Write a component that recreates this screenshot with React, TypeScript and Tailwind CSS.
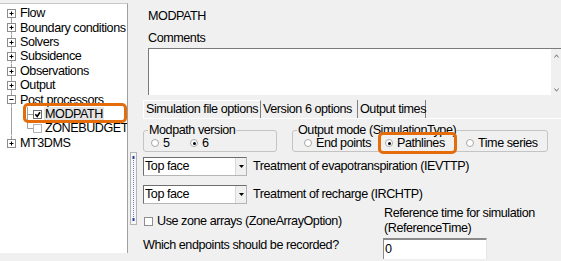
import React from "react";

function TreeBox({ open = false, top = true, bottom = true }: { open?: boolean; top?: boolean; bottom?: boolean }) {
	return (
		<svg width="18" height="14.4" className="shrink-0">
			{top && <line x1="11.5" y1="0" x2="11.5" y2="3" stroke="#a0a0a0" />}
			{bottom && <line x1="11.5" y1="12" x2="11.5" y2="14.4" stroke="#a0a0a0" />}
			<rect x="7.5" y="3.5" width="8" height="8" fill="#fff" stroke="#8c8c8c" />
			<line x1="9.5" y1="7.5" x2="13.5" y2="7.5" stroke="#000" />
			{!open && <line x1="11.5" y1="5.5" x2="11.5" y2="9.5" stroke="#000" />}
		</svg>
	);
}

function ChildLines({ checked, last }: { checked: boolean; last: boolean }) {
	return (
		<svg width="44" height="14.4" className="shrink-0">
			<line x1="11.5" y1="0" x2="11.5" y2="14.4" stroke="#a0a0a0" />
			<line x1="27.5" y1="0" x2="27.5" y2={last ? 7.5 : 14.4} stroke="#a0a0a0" />
			<line x1="27.5" y1="7.5" x2="33" y2="7.5" stroke="#a0a0a0" />
			<rect x="33.5" y="3.5" width="8" height="8" fill="#fff" stroke={checked ? "#6e6e6e" : "#b4b4b4"} />
			{checked && <path d="M35.3 7.3 L37.2 9.4 L40 5.2" fill="none" stroke="#000" strokeWidth="1.6" />}
		</svg>
	);
}

function Radio({ checked = false }: { checked?: boolean }) {
	return (
		<span className="w-[8px] h-[8px] shrink-0 rounded-full border border-[#a8a8a8] bg-white flex items-center justify-center">
			{checked && <span className="w-[3px] h-[3px] rounded-full bg-black" />}
		</span>
	);
}

function Combo({ value }: { value: string }) {
	return (
		<div className="w-[104px] h-[19px] flex bg-white border border-[#b5b5b5] border-t-[#6d6d6d] border-l-[#6d6d6d]">
			<div className="flex-1 pl-[1px] leading-[17px]">{value}</div>
			<div className="w-[11px] bg-[#f0f0f0] border-l border-[#d8d8d8] flex items-center justify-center">
				<svg width="5" height="3">
					<path d="M0 0 H5 L2.5 3 Z" fill="#000" />
				</svg>
			</div>
		</div>
	);
}

const tree = ["Flow", "Boundary conditions", "Solvers", "Subsidence", "Observations", "Output"];

export default function App() {
	return (
		<div className="w-[561px] h-[261px] flex items-start bg-[#f0f0f0] overflow-hidden text-black text-[12.6px] tracking-[-0.45px] font-['Liberation_Sans',Arial,sans-serif]">
			{/* tree */}
			<div className="mt-[3px] w-[128px] h-[250px] shrink-0 bg-white border-t border-[#c8c8c8] border-r border-r-[#a0a0a0] pt-[2px] overflow-hidden">
				{tree.map((t, i) => (
					<div key={t} className="h-[14.4px] flex items-center whitespace-nowrap">
						<TreeBox top={i > 0} />
						<span className="ml-[2px] leading-[14px]">{t}</span>
					</div>
				))}
				<div className="h-[14.4px] flex items-center whitespace-nowrap">
					<TreeBox open />
					<span className="ml-[2px] leading-[14px]">Post processors</span>
				</div>
				<div className="relative h-[14.4px] flex items-center whitespace-nowrap">
					<ChildLines checked last={false} />
					<span className="px-[1px] leading-[14px] bg-[#e4e4e4]">MODPATH</span>
					<div className="absolute left-[23px] top-[-4px] w-[104px] h-[20px] border-[3px] border-[#e46c0a] rounded-[5px]" />
				</div>
				<div className="h-[14.4px] flex items-center whitespace-nowrap">
					<ChildLines checked={false} last />
					<span className="px-[1px] leading-[14px]">ZONEBUDGET</span>
				</div>
				<div className="h-[14.4px] flex items-center whitespace-nowrap">
					<TreeBox bottom={false} />
					<span className="ml-[2px] leading-[14px]">MT3DMS</span>
				</div>
			</div>

			{/* splitter */}
			<div className="w-[9px] shrink-0 pt-[152px] pl-[2px]">
				<svg width="7" height="73">
					<rect x="0.5" y="0.5" width="6" height="72" fill="#f6f6f6" stroke="#b4b4b4" />
					<line x1="3.5" y1="6" x2="3.5" y2="67" stroke="#6a7fc8" strokeDasharray="1 1" />
					<rect x="2.5" y="4" width="2" height="3" fill="#2a3fa0" />
					<rect x="2.5" y="66" width="2" height="3" fill="#2a3fa0" />
				</svg>
			</div>

			{/* right side */}
			<div className="flex-1 min-w-0 h-full flex flex-col pt-[8px] overflow-hidden">
				<div className="ml-[11px] leading-[16px]">MODPATH</div>
				<div className="ml-[11px] mt-[6px] leading-[16px]">Comments</div>
				<div className="ml-[11px] mt-[2px] h-[47px] flex bg-white border-t border-l border-[#7a7a7a]">
					<div className="flex-1" />
					<div className="w-[10px] bg-[#f0f0f0] flex flex-col justify-between items-center pt-[5px] pb-[3px]">
						<svg width="5" height="4">
							<path d="M0.5 3.5 L2.5 0.8 L4.5 3.5" fill="none" stroke="#707070" />
						</svg>
						<svg width="5" height="4">
							<path d="M0.5 0.5 L2.5 3.2 L4.5 0.5" fill="none" stroke="#707070" />
						</svg>
					</div>
				</div>

				{/* tabs */}
				<div className="mt-[5px] ml-[6px] h-[19px] flex border-b border-white whitespace-nowrap">
					<div className="w-[118px] pl-[2px] leading-[17px] border-t border-l border-white border-r border-r-[#808080]">Simulation file options</div>
					<div className="w-[97px] pl-[2px] leading-[18px] border-r border-[#808080]">Version 6 options</div>
					<div className="w-[68px] pl-[2px] leading-[18px] border-r border-[#808080]">Output times</div>
				</div>

				{/* group boxes */}
				<div className="mt-[5px] ml-[6px] flex gap-[15px] whitespace-nowrap">
					<fieldset className="w-[134px] border border-[#c4c4c4] rounded-[3px] p-0">
						<legend className="ml-[4px] px-[1px] leading-[12px]">Modpath version</legend>
						<div className="h-[14px] pl-[7px] flex items-center">
							<div className="w-[39px] flex items-center gap-[4px]">
								<Radio />
								<span className="leading-[14px]">5</span>
							</div>
							<div className="flex items-center gap-[4px]">
								<Radio checked />
								<span className="leading-[14px]">6</span>
							</div>
						</div>
						<div className="h-[1px]" />
					</fieldset>
					<fieldset className="w-[256px] border border-[#c4c4c4] rounded-[3px] p-0">
						<legend className="ml-[4px] px-[1px] leading-[12px]">Output mode (SimulationType)</legend>
						<div className="h-[14px] pl-[11px] flex items-center">
							<div className="w-[81px] flex items-center gap-[4px]">
								<Radio />
								<span className="leading-[14px]">End points</span>
							</div>
							<div className="relative w-[81px] flex items-center gap-[4px]">
								<Radio checked />
								<span className="leading-[14px]">Pathlines</span>
								<div className="absolute left-[-7px] top-[-4px] w-[79px] h-[22px] border-[3px] border-[#e46c0a] rounded-[5px]" />
							</div>
							<div className="flex items-center gap-[4px]">
								<Radio />
								<span className="leading-[14px]">Time series</span>
							</div>
						</div>
						<div className="h-[1px]" />
					</fieldset>
				</div>

				{/* combos */}
				<div className="mt-[5px] ml-[6px] flex items-center gap-[6px] whitespace-nowrap">
					<Combo value="Top face" />
					<span>Treatment of evapotranspiration (IEVTTP)</span>
				</div>
				<div className="mt-[9px] ml-[6px] flex items-center gap-[6px] whitespace-nowrap">
					<Combo value="Top face" />
					<span>Treatment of recharge (IRCHTP)</span>
				</div>

				{/* bottom */}
				<div className="mt-[2px] ml-[6px] flex whitespace-nowrap">
					<div className="w-[240px] flex flex-col">
						<div className="mt-[8px] h-[14px] flex items-center gap-[4px] pl-[1px]">
							<span className="w-[9px] h-[9px] bg-white border border-[#8e8e8e]" />
							<span className="leading-[14px]">Use zone arrays (ZoneArrayOption)</span>
						</div>
						<div className="mt-[10px] leading-[14px]">Which endpoints should be recorded?</div>
					</div>
					<div className="flex flex-col">
						<div className="pl-[1px] leading-[15px]">Reference time for simulation</div>
						<div className="pl-[1px] leading-[15px]">(ReferenceTime)</div>
						<div className="mt-[2px] w-[104px] h-[21px] bg-white border-t-2 border-l border-[#8a8a8a] border-r border-r-[#e6e6e6] pl-[1px] leading-[18px]">0</div>
					</div>
				</div>
			</div>
		</div>
	);
}
